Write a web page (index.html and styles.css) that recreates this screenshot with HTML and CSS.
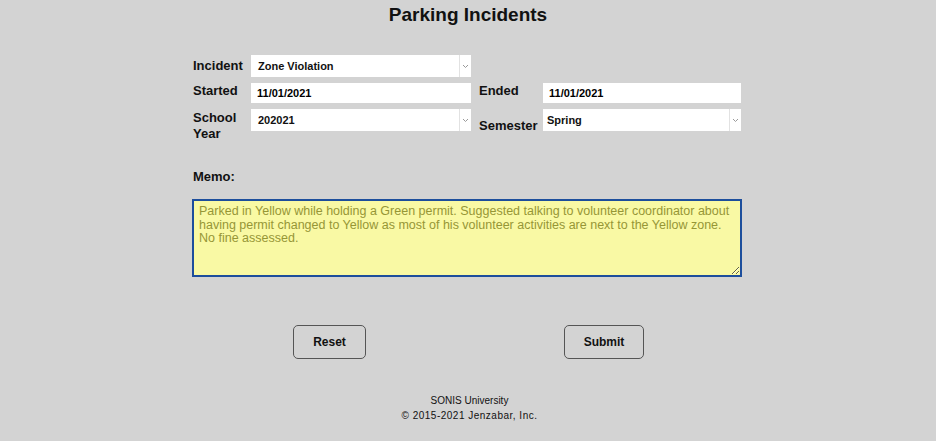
FILE: index.html
```html
<!DOCTYPE html>
<html lang="en">
<head>
<meta charset="utf-8">
<title>Parking Incidents</title>
<link rel="stylesheet" href="styles.css">
</head>
<body>
<h1 class="title">Parking Incidents</h1>
<form class="form">
  <div class="grid">
    <div class="label lbl-mid">Incident</div>
    <div class="select">
      <span class="select-value">Zone Violation</span>
      <span class="select-arrow"><svg width="7" height="5" viewBox="0 0 7 5"><polyline points="1,1 3.5,3.5 6,1" fill="none" stroke="#9a9a9a" stroke-width="1"/></svg></span>
    </div>
    <div class="empty"></div>
    <div class="empty"></div>

    <div class="label lbl-top">Started</div>
    <div class="input">11/01/2021</div>
    <div class="label lbl-top lbl-right">Ended</div>
    <div class="input">11/01/2021</div>

    <div class="label lbl-top lbl-two">School Year</div>
    <div class="select sel-top">
      <span class="select-value">202021</span>
      <span class="select-arrow"><svg width="7" height="5" viewBox="0 0 7 5"><polyline points="1,1 3.5,3.5 6,1" fill="none" stroke="#9a9a9a" stroke-width="1"/></svg></span>
    </div>
    <div class="label lbl-mid lbl-right">Semester</div>
    <div class="select sel-top">
      <span class="select-value val-right">Spring</span>
      <span class="select-arrow"><svg width="7" height="5" viewBox="0 0 7 5"><polyline points="1,1 3.5,3.5 6,1" fill="none" stroke="#9a9a9a" stroke-width="1"/></svg></span>
    </div>
  </div>

  <div class="memo-label">Memo:</div>
  <textarea class="memo">Parked in Yellow while holding a Green permit. Suggested talking to volunteer coordinator about having permit changed to Yellow as most of his volunteer activities are next to the Yellow zone. No fine assessed.</textarea>

  <div class="actions">
    <div class="action-cell"><button type="button" class="btn btn-reset">Reset</button></div>
    <div class="action-cell"><button type="button" class="btn btn-submit">Submit</button></div>
  </div>
</form>
<footer class="footer">
  <div class="footer-line">SONIS University</div>
  <div class="footer-line">&copy; 2015-2021 Jenzabar, Inc.</div>
</footer>
</body>
</html>
```
FILE: styles.css
```css
* { box-sizing: border-box; }
html, body {
  margin: 0;
  padding: 0;
  background: #d3d3d3;
  font-family: "Liberation Sans", Arial, sans-serif;
  color: #000;
}
.title {
  margin: 0;
  padding-top: 4px;
  font-size: 19px;
  line-height: 22px;
  font-weight: bold;
  text-align: center;
  color: #111;
}
.form {
  width: 550px;
  margin: 29px 0 0 192px;
  display: flex;
  flex-direction: column;
}
.grid {
  display: grid;
  grid-template-columns: 58px 220px 72px 198px;
  row-gap: 6px;
  padding-left: 1px;
}
.label {
  font-size: 13px;
  font-weight: bold;
  line-height: 16px;
  color: #111;
}
.lbl-right { padding-left: 8px; }
.lbl-mid { align-self: center; }
.lbl-top { align-self: start; }
.lbl-two { padding-top: 1px; }
.select {
  height: 22px;
  background: #fff;
  display: flex;
  align-items: stretch;
}
.sel-top { align-self: start; }
.select-value {
  flex: 1;
  padding-left: 7px;
  font-size: 11px;
  font-weight: bold;
  line-height: 23px;
  color: #111;
}
.val-right { padding-left: 4px; }
.select-arrow {
  width: 12px;
  border-left: 1px solid #e2e2e2;
  display: flex;
  align-items: center;
  justify-content: center;
}
.input {
  height: 20px;
  background: #fff;
  font-size: 11px;
  font-weight: bold;
  line-height: 21px;
  padding-left: 6px;
  color: #000;
}
.memo-label {
  margin-top: 27px;
  padding-left: 1px;
  font-size: 13px;
  font-weight: bold;
  line-height: 16px;
  color: #111;
}
.memo {
  display: block;
  margin: 14px 0 0 0;
  width: 550px;
  height: 78px;
  border: 2px solid #1d4e9c;
  background: #f9f9a4;
  color: #969636;
  font-family: "Liberation Sans", Arial, sans-serif;
  font-size: 12.5px;
  line-height: 13.5px;
  padding: 4px 4px 4px 5px;
  resize: both;
  outline: none;
}
.actions {
  display: flex;
  margin-top: 48px;
}
.action-cell {
  flex: 1;
  display: flex;
  justify-content: center;
}
.btn {
  height: 34px;
  border: 1px solid #555;
  border-radius: 5px;
  background: transparent;
  font-family: "Liberation Sans", Arial, sans-serif;
  font-size: 12px;
  font-weight: bold;
  color: #111;
  padding: 0;
}
.btn-reset { width: 73px; }
.btn-submit { width: 80px; margin-left: -1px; }
.footer {
  margin-top: 34px;
  text-align: center;
  font-size: 10px;
  line-height: 15px;
  color: #111;
  padding-left: 3px;
}
.footer-line + .footer-line { letter-spacing: 0.5px; }
```
